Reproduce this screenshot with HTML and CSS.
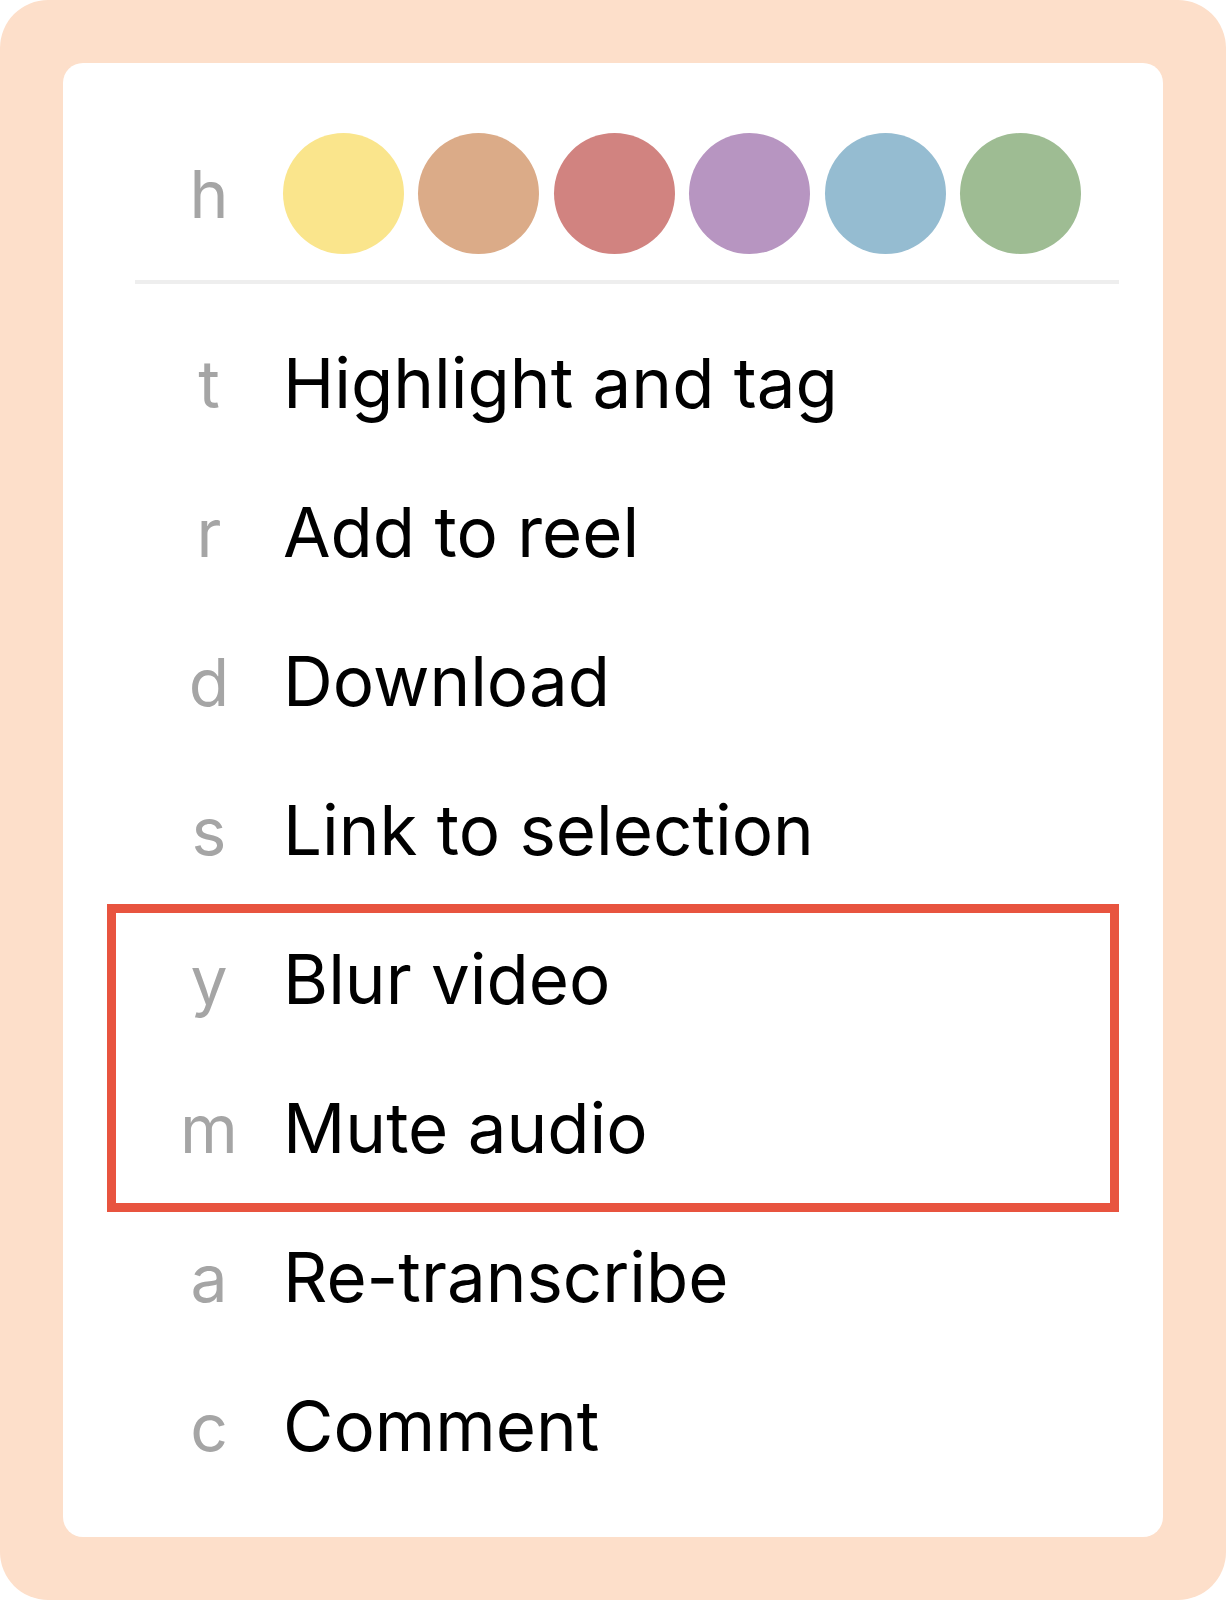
FILE: index.html
```html
<!DOCTYPE html>
<html lang="en">
<head>
    <meta charset="UTF-8">
    <meta name="viewport" content="width=device-width, initial-scale=1.0">
    <title>Shortcut Menu</title>
    <link rel="stylesheet" href="styles.css">
</head>
<body>

<div class="frame">
    <div class="menu">
        <div class="colors">
            <span class="key">h</span>
            <div class="swatches">
                <span class="swatch swatch-yellow"></span>
                <span class="swatch swatch-tan"></span>
                <span class="swatch swatch-red"></span>
                <span class="swatch swatch-purple"></span>
                <span class="swatch swatch-blue"></span>
                <span class="swatch swatch-green"></span>
            </div>
        </div>
        <hr class="divider">
        <ul class="actions">
            <li class="action"><span class="key">t</span><span class="label">Highlight and tag</span></li>
            <li class="action"><span class="key">r</span><span class="label">Add to reel</span></li>
            <li class="action"><span class="key">d</span><span class="label">Download</span></li>
            <li class="action"><span class="key">s</span><span class="label">Link to selection</span></li>
            <li class="group">
                <ul class="actions">
                    <li class="action"><span class="key">y</span><span class="label">Blur video</span></li>
                    <li class="action"><span class="key">m</span><span class="label">Mute audio</span></li>
                </ul>
            </li>
            <li class="action"><span class="key">a</span><span class="label">Re-transcribe</span></li>
            <li class="action"><span class="key">c</span><span class="label">Comment</span></li>
        </ul>
    </div>
</div>

</body>
</html>
```

FILE: styles.css
```css
body {
    margin: 0;
    padding: 0;
    background: #ffffff;
    font-family: Inter, "Noto Sans", sans-serif;
}
.frame {
    height: 1600px;
    box-sizing: border-box;
    padding: 63px;
    background: #fddfca;
    border-radius: 48px;
}
.menu {
    height: 100%;
    box-sizing: border-box;
    padding: 70px 44px 36px 72px;
    background: #ffffff;
    border-radius: 20px;
}
.colors {
    display: flex;
    align-items: center;
}
.key {
    width: 148px;
    flex-shrink: 0;
    text-align: center;
    color: #a5a5a5;
    font-size: 66px;
}
.swatches {
    display: flex;
    gap: 14.4px;
}
.swatch {
    width: 121px;
    height: 121px;
    border-radius: 50%;
}
.swatch-yellow { background: #fae58c; }
.swatch-tan { background: #dbab88; }
.swatch-red { background: #d18380; }
.swatch-purple { background: #b795c1; }
.swatch-blue { background: #95bcd1; }
.swatch-green { background: #9ebc93; }
.divider {
    height: 4px;
    margin: 26px 0 25px;
    border: none;
    background: #eeeeee;
}
.actions {
    list-style: none;
    margin: 0;
    padding: 0;
}
.action {
    display: flex;
    align-items: baseline;
    height: 149px;
    line-height: 149px;
}
.label {
    color: #000000;
    font-size: 69px;
}
.group {
    position: relative;
}
.group::after {
    content: "";
    position: absolute;
    top: -1px;
    bottom: -9px;
    left: -28px;
    right: 0;
    border: 9px solid #e8543f;
}
```
